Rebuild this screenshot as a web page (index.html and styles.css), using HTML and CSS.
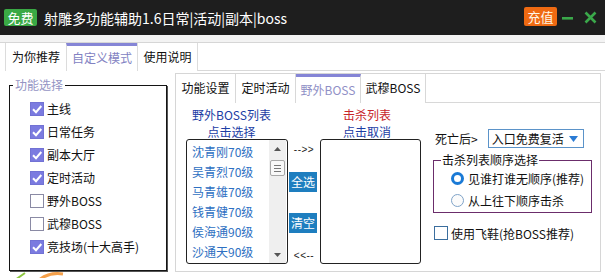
FILE: index.html
```html
<!DOCTYPE html>
<html>
<head>
<meta charset="utf-8">
<link rel="stylesheet" href="styles.css">
</head>
<body>
<div class="titlebar">
  <span class="badge-free">免费</span>
  <span class="title">射雕多功能辅助1.6日常|活动|副本|boss</span>
  <span class="spacer"></span>
  <span class="badge-charge">充值</span>
  <svg class="min" width="12" height="12" viewBox="0 0 12 12"><rect x="0" y="5" width="11" height="2.6" fill="#3aa84a"/></svg>
  <svg class="close" width="13" height="13" viewBox="0 0 13 13"><path d="M1.5 1.5 L11.5 11.5 M11.5 1.5 L1.5 11.5" stroke="#3aa84a" stroke-width="2.6"/></svg>
</div>
<div class="strip"></div>
<div class="tabs">
  <div class="tab t1">为你推荐</div>
  <div class="tab t2 sel">自定义模式</div>
  <div class="tab t3">使用说明</div>
  <div class="tabfill"></div>
</div>
<div class="main">
  <div class="left">
    <fieldset class="grp">
      <legend>功能选择</legend>
      <div class="rows">
        <div class="cbrow"><span class="cb on"><svg width="14" height="14" viewBox="0 0 14 14"><path d="M3 7.2 L6 10.2 L11.3 4" fill="none" stroke="#fff" stroke-width="2"/></svg></span>主线</div>
        <div class="cbrow"><span class="cb on"><svg width="14" height="14" viewBox="0 0 14 14"><path d="M3 7.2 L6 10.2 L11.3 4" fill="none" stroke="#fff" stroke-width="2"/></svg></span>日常任务</div>
        <div class="cbrow"><span class="cb on"><svg width="14" height="14" viewBox="0 0 14 14"><path d="M3 7.2 L6 10.2 L11.3 4" fill="none" stroke="#fff" stroke-width="2"/></svg></span>副本大厅</div>
        <div class="cbrow"><span class="cb on"><svg width="14" height="14" viewBox="0 0 14 14"><path d="M3 7.2 L6 10.2 L11.3 4" fill="none" stroke="#fff" stroke-width="2"/></svg></span>定时活动</div>
        <div class="cbrow"><span class="cb"></span>野外BOSS</div>
        <div class="cbrow"><span class="cb"></span>武穆BOSS</div>
        <div class="cbrow"><span class="cb on"><svg width="14" height="14" viewBox="0 0 14 14"><path d="M3 7.2 L6 10.2 L11.3 4" fill="none" stroke="#fff" stroke-width="2"/></svg></span>竞技场(十大高手)</div>
      </div>
    </fieldset>
    <svg class="deco" width="70" height="8" viewBox="0 0 70 8"><path d="M4 8 L14 1" stroke="#8cc63f" stroke-width="2" fill="none"/><path d="M28 8 Q38 0 52 2" stroke="#f5a04a" stroke-width="3" fill="none"/></svg>
  </div>
  <div class="panel">
    <div class="itabs">
      <div class="itab w60">功能设置</div>
      <div class="itab w60">定时活动</div>
      <div class="itab w65 sel">野外BOSS</div>
      <div class="itab w65">武穆BOSS</div>
      <div class="itabfill"></div>
    </div>
    <div class="icontent">
      <div class="col-list">
        <div class="lbl lbl-l"><div class="blue">野外BOSS列表</div><div class="blue">点击选择</div></div>
        <div class="listbox">
          <div class="items">
            <div>沈青刚70级</div>
            <div>吴青烈70级</div>
            <div>马青雄70级</div>
            <div>钱青健70级</div>
            <div>侯海通90级</div>
            <div>沙通天90级</div>
          </div>
          <div class="scroll">
            <div class="arr"><svg width="7" height="4" viewBox="0 0 7 4"><path d="M0 4 L3.5 0 L7 4Z" fill="#555"/></svg></div>
            <div class="thumb"><span></span><span></span><span></span></div>
            <div class="sfill"></div>
            <div class="arr"><svg width="7" height="4" viewBox="0 0 7 4"><path d="M0 0 L3.5 4 L7 0Z" fill="#555"/></svg></div>
          </div>
        </div>
      </div>
      <div class="col-mid">
        <div class="arrow a1">--&gt;&gt;</div>
        <div class="btn b1">全选</div>
        <div class="btn b2">清空</div>
        <div class="arrow a2">&lt;&lt;--</div>
      </div>
      <div class="col-list col-kill">
        <div class="lbl lbl-r"><div class="red">击杀列表</div><div class="blue">点击取消</div></div>
        <div class="listbox"></div>
      </div>
      <div class="col-set">
        <div class="deathrow">
          <span class="death">死亡后&gt;</span>
          <div class="dropdown"><span>入口免费复活</span><svg width="9" height="6" viewBox="0 0 9 6"><path d="M0 0 L9 0 L4.5 6Z" fill="#2a7bd4"/></svg></div>
        </div>
        <fieldset class="grp2">
          <legend>击杀列表顺序选择</legend>
          <div class="rrow r1"><span class="radio on"></span>见谁打谁无顺序(推荐)</div>
          <div class="rrow r2"><span class="radio"></span>从上往下顺序击杀</div>
        </fieldset>
        <div class="shoe"><span class="cb2"></span>使用飞鞋(抢BOSS推荐)</div>
      </div>
    </div>
  </div>
</div>
</body>
</html>
```
FILE: styles.css
```css
* { box-sizing: border-box; }
html, body { margin: 0; padding: 0; }
body {
  width: 605px; height: 278px; overflow: hidden;
  background: #fff;
  font-family: "Noto Sans CJK SC", "Noto Sans", sans-serif;
  font-size: 12px; color: #111;
}
.titlebar {
  height: 35px; background: #1e1e1e;
  display: flex; align-items: center;
  padding: 0 8px 0 4px;
}
.badge-free {
  width: 33px; height: 17px; line-height: 17px; text-align: center;
  background: #3aa945; color: #fff; font-size: 13px; border-radius: 2px;
}
.title { margin-left: 7px; color: #fff; font-size: 14px; line-height: 18px; }
.spacer { flex: 1; }
.badge-charge {
  width: 33px; height: 19px; line-height: 19px; text-align: center;
  background: #ef6a12; color: #fff6e6; font-size: 13px; border-radius: 2px;
  margin-bottom: 2px;
}
.min { margin-left: 5px; }
.close { margin-left: 10px; margin-bottom: 1px; }
.strip { height: 8px; background: #f3f3f3; border-bottom: 1px solid #d6d6d6; }
.tabs { display: flex; height: 28px; padding-left: 5px; }
.tab {
  height: 28px; line-height: 27px; text-align: center; font-size: 12px;
  border-left: 1px solid #dcdcdc; color: #111;
}
.t1 { width: 61px; }
.t2 { width: 71px; }
.t3 { width: 61px; border-right: 1px solid #dcdcdc; }
.tab.sel { border-top: 3px solid #8585d6; line-height: 24px; color: #8282c2; }
.tabfill { flex: 1; border-bottom: 1px solid #d8d8d8; }
.main { display: flex; height: 207px; }
.left { width: 175px; padding-left: 9px; }
.grp {
  margin: 7px 0 0 0; width: 158px;
  border: 1px solid #141414; padding: 0 0 12px 0;
  box-shadow: 1px 1px 0 #555;
}
.grp legend {
  margin-left: 3px; padding: 0 2px;
  font-size: 12px; line-height: 14px; color: #9494c4;
}
.rows { padding-top: 5px; }
.cbrow { display: flex; align-items: center; height: 23px; padding-left: 20px; font-size: 12px; }
.cb {
  width: 14px; height: 14px; margin-right: 3px;
  border: 1px solid #8a8aa4; background: #fff; display: flex;
}
.cb.on { background: #7b7be0; border-color: #7272d4; }
.cb svg { margin: -1px; }
.deco { display: block; margin: 1px 0 0 2px; }
.panel {
  margin-top: 2px; width: 426px; height: 199px;
  border: 1px solid #d6d6d6;
  display: flex; flex-direction: column;
}
.itabs { display: flex; height: 29px; }
.itab {
  height: 29px; line-height: 28px; text-align: center;
  border-right: 1px solid #d8d8d8; font-size: 12px; color: #111;
}
.w60 { width: 60px; }
.w65 { width: 65px; }
.itab.sel { border-top: 3px solid #8585d6; line-height: 25px; color: #9090c6; }
.itabfill { flex: 1; border-bottom: 1px solid #d8d8d8; }
.icontent { display: flex; padding-left: 10px; }
.col-list { width: 102px; }
.col-kill { width: 101px; }
.lbl { padding-top: 3px; line-height: 17px; text-align: center; height: 36px; }
.lbl-l { padding-right: 11px; }
.lbl-r { padding-right: 7px; }
.blue { color: #1c3da4; }
.red { color: #c8262a; }
.listbox {
  height: 125px; border: 1px solid #222; border-radius: 3px;
  display: flex;
}
.items { flex: 1; padding: 2px 0 0 5px; line-height: 20px; color: #2e70c2; }
.scroll {
  width: 17px; margin: 0 1px 0 0; background: #efefef;
  display: flex; flex-direction: column; align-items: center;
}
.arr { height: 17px; display: flex; align-items: center; justify-content: center; }
.thumb {
  width: 15px; height: 16px; margin-top: 3px;
  border: 1px solid #a8a8a8; background: #f8f8f8; border-radius: 2px;
  display: flex; flex-direction: column; align-items: center; justify-content: center; gap: 2px;
}
.thumb span { display: block; width: 7px; height: 1px; background: #777; }
.sfill { flex: 1; }
.col-mid { width: 32px; display: flex; flex-direction: column; align-items: center; }
.arrow { font-family: "Liberation Sans", sans-serif; font-size: 10px; line-height: 12px; color: #222; letter-spacing: 0.5px; }
.a1 { margin-top: 41px; }
.a2 { margin-top: 17px; }
.btn {
  width: 28px; height: 20px; line-height: 20px; text-align: center;
  background: #1e7ebf; color: #fff; font-size: 12px; margin-left: -2px;
}
.b1 { margin-top: 16px; }
.b2 { margin-top: 21px; }
.col-set { margin-left: 12px; width: 159px; }
.deathrow { display: flex; align-items: center; margin-top: 26px; height: 19px; }
.death { padding-left: 2px; }
.dropdown {
  margin-left: 10px; width: 96px; height: 19px;
  border: 1px solid #5b93c9; display: flex; align-items: center;
  padding: 0 3px 0 3px; justify-content: space-between;
}
.dropdown svg { margin-right: 2px; }
.grp2 {
  margin: 5px 0 0 0; width: 159px; padding: 0;
  border: 1px solid #6b2d6b;
}
.grp2 legend { margin-left: 7px; padding: 0 1px; line-height: 14px; font-size: 12px; color: #111; }
.rrow { display: flex; align-items: center; padding-left: 17px; }
.r1 { height: 22px; }
.r2 { height: 23px; }
.radio {
  width: 13px; height: 13px; border-radius: 50%;
  border: 1px solid #7fa3c8; background: #fbfbfb; margin-right: 4px;
}
.radio.on { border: 3px solid #1a7ad6; background: #fff; }
.shoe { display: flex; align-items: center; margin-top: 13px; height: 14px; padding-left: 1px; }
.cb2 { width: 14px; height: 14px; border: 1px solid #3b6e9e; margin-right: 3px; background: #fff; }
```
